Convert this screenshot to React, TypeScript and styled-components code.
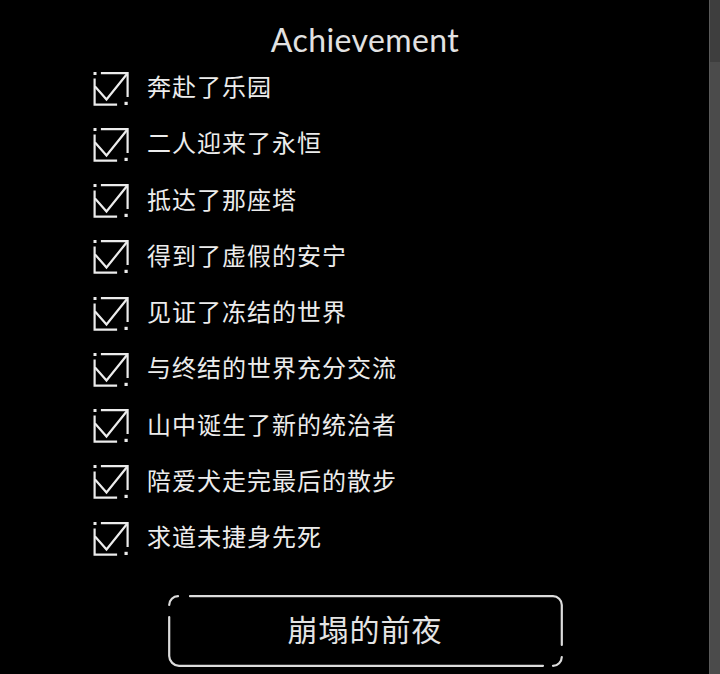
import React from "react";
import styled, { createGlobalStyle } from "styled-components";

const GlobalStyle = createGlobalStyle`
  html, body {
    margin: 0;
    padding: 0;
    background: #000;
    overflow: hidden;
  }
  #root {
    height: 674px;
  }
`;

const Page = styled.div`
  display: flex;
  height: 674px;
  background: #000;
`;

const Main = styled.main`
  flex: 1;
  display: flex;
  flex-direction: column;
  padding: 20px 0 0 21px;
  box-sizing: border-box;
`;

const Title = styled.h1`
  margin: 0;
  height: 40px;
  line-height: 40px;
  text-align: center;
  font-family: "Lato", "Open Sans", sans-serif;
  font-weight: 400;
  font-size: 32px;
  color: #e2e2e2;
  letter-spacing: 0.4px;
`;

const List = styled.ul`
  list-style: none;
  margin: 0 0 0 72px;
  padding: 0;
  display: flex;
  flex-direction: column;
`;

const Row = styled.li`
  display: flex;
  align-items: center;
  gap: 18px;
  height: 56.25px;
`;

const Label = styled.span`
  font-family: "Noto Sans CJK SC", "Noto Sans", sans-serif;
  font-size: 24px;
  letter-spacing: 1px;
  color: #ececec;
  line-height: 1;
  padding-bottom: 4px;
`;

const CheckIcon = styled.svg`
  width: 36px;
  height: 35px;
  flex: none;
  display: block;
`;

const ButtonWrap = styled.div`
  display: flex;
  justify-content: center;
  margin-top: 29px;
`;

const FrameButton = styled.button`
  position: relative;
  width: 395px;
  height: 72px;
  background: transparent;
  border: none;
  padding: 0 0 7px 0;
  font-family: "Noto Sans CJK SC", "Noto Sans", sans-serif;
  font-size: 30px;
  letter-spacing: 1px;
  color: #e4e4e4;
  cursor: pointer;
  display: flex;
  align-items: center;
  justify-content: center;
`;

const Frame = styled.svg`
  position: absolute;
  inset: 0;
  width: 100%;
  height: 100%;
  pointer-events: none;
`;

const Scrollbar = styled.div`
  width: 10px;
  flex: none;
  display: flex;
  flex-direction: column;
  border-left: 1px solid #5a5a5a;
`;

const ScrollTrack = styled.div<{ $h?: number }>`
  background: #3e3e3e;
  height: ${(p) => p.$h ?? 62}px;
  flex: none;
`;

const ScrollThumb = styled.div`
  background: #4b4b4b;
  flex: 1;
`;

const Check = () => (
  <CheckIcon viewBox="0 0 36 35" fill="none" stroke="#ececec" strokeWidth={2.2} strokeLinecap="square">
    <rect x="0.5" y="1" width="3" height="3" fill="#ececec" stroke="none" />
    <path d="M9 2.2 H34.6 V25" />
    <path d="M1.6 8.5 V33.6 H23" />
    <rect x="31.5" y="30.8" width="3.2" height="3.2" fill="#ececec" stroke="none" />
    <path d="M2.5 16 L13.5 28.5 L34 3" strokeLinecap="round" strokeLinejoin="miter" />
  </CheckIcon>
);

const items = [
  "奔赴了乐园",
  "二人迎来了永恒",
  "抵达了那座塔",
  "得到了虚假的安宁",
  "见证了冻结的世界",
  "与终结的世界充分交流",
  "山中诞生了新的统治者",
  "陪爱犬走完最后的散步",
  "求道未捷身先死",
];

export default function App() {
  return (
    <>
      <GlobalStyle />
      <Page>
        <Main>
          <Title>Achievement</Title>
          <List>
            {items.map((t) => (
              <Row key={t}>
                <Check />
                <Label>{t}</Label>
              </Row>
            ))}
          </List>
          <ButtonWrap>
            <FrameButton>
              <Frame viewBox="0 0 395 72" fill="none" stroke="#dcdcdc" strokeWidth={2.2} strokeLinecap="round">
                <path d="M1.2 10 A9 9 0 0 1 10 1.2" />
                <path d="M22 1.2 H385 A9 9 0 0 1 393.8 10 V50" />
                <path d="M1.2 22 V61 A10 10 0 0 0 11 70.8 H375" />
                <path d="M393.8 62 A9 9 0 0 1 385 70.8" />
              </Frame>
              崩塌的前夜
            </FrameButton>
          </ButtonWrap>
        </Main>
        <Scrollbar>
          <ScrollTrack $h={62} />
          <ScrollThumb />
        </Scrollbar>
      </Page>
    </>
  );
}
